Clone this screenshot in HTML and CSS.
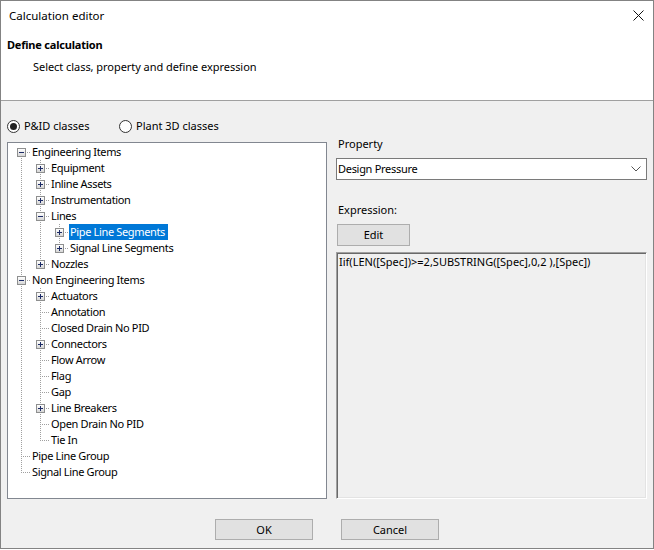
FILE: index.html
```html
<!DOCTYPE html>
<html>
<head>
<meta charset="utf-8">
<title>Calculation editor</title>
<link rel="stylesheet" href="styles.css">
</head>
<body>
<div class="window">
  <div class="titlebar">
    <span class="title">Calculation editor</span>
    <svg class="close" width="11" height="11" viewBox="0 0 11 11"><path d="M0.5 0.5L10.5 10.5M10.5 0.5L0.5 10.5" stroke="#111" stroke-width="1" fill="none"/></svg>
  </div>
  <div class="header">
    <div class="h-title">Define calculation</div>
    <div class="h-sub">Select class, property and define expression</div>
  </div>
  <div class="body">
    <div class="main">
      <div class="left">
        <div class="radios">
          <label class="radio first"><svg width="13" height="13" viewBox="0 0 13 13"><circle cx="6.5" cy="6.5" r="6" fill="#fff" stroke="#333"/><circle cx="6.5" cy="6.5" r="3.5" fill="#222"/></svg><span>P&amp;ID classes</span></label>
          <label class="radio"><svg width="13" height="13" viewBox="0 0 13 13"><circle cx="6.5" cy="6.5" r="6" fill="#fff" stroke="#333"/></svg><span>Plant 3D classes</span></label>
        </div>
        <div class="tree">
          <div class="row"><span class="c start"><i class="box minus"></i></span><span class="lbl">Engineering Items</span></div>
          <div class="row"><span class="c pipe"></span><span class="c tee"><i class="box plus"></i></span><span class="lbl">Equipment</span></div>
          <div class="row"><span class="c pipe"></span><span class="c tee"><i class="box plus"></i></span><span class="lbl">Inline Assets</span></div>
          <div class="row"><span class="c pipe"></span><span class="c tee"><i class="box plus"></i></span><span class="lbl">Instrumentation</span></div>
          <div class="row"><span class="c pipe"></span><span class="c tee"><i class="box minus"></i></span><span class="lbl">Lines</span></div>
          <div class="row"><span class="c pipe"></span><span class="c pipe"></span><span class="c tee"><i class="box plus"></i></span><span class="lbl sel">Pipe Line Segments</span></div>
          <div class="row"><span class="c pipe"></span><span class="c pipe"></span><span class="c elbow"><i class="box plus"></i></span><span class="lbl">Signal Line Segments</span></div>
          <div class="row"><span class="c pipe"></span><span class="c elbow"><i class="box plus"></i></span><span class="lbl">Nozzles</span></div>
          <div class="row"><span class="c tee"><i class="box minus"></i></span><span class="lbl">Non Engineering Items</span></div>
          <div class="row"><span class="c pipe"></span><span class="c tee"><i class="box plus"></i></span><span class="lbl">Actuators</span></div>
          <div class="row"><span class="c pipe"></span><span class="c tee"></span><span class="lbl">Annotation</span></div>
          <div class="row"><span class="c pipe"></span><span class="c tee"></span><span class="lbl">Closed Drain No PID</span></div>
          <div class="row"><span class="c pipe"></span><span class="c tee"><i class="box plus"></i></span><span class="lbl">Connectors</span></div>
          <div class="row"><span class="c pipe"></span><span class="c tee"></span><span class="lbl">Flow Arrow</span></div>
          <div class="row"><span class="c pipe"></span><span class="c tee"></span><span class="lbl">Flag</span></div>
          <div class="row"><span class="c pipe"></span><span class="c tee"></span><span class="lbl">Gap</span></div>
          <div class="row"><span class="c pipe"></span><span class="c tee"><i class="box plus"></i></span><span class="lbl">Line Breakers</span></div>
          <div class="row"><span class="c pipe"></span><span class="c tee"></span><span class="lbl">Open Drain No PID</span></div>
          <div class="row"><span class="c pipe"></span><span class="c elbow"></span><span class="lbl">Tie In</span></div>
          <div class="row"><span class="c tee"></span><span class="lbl">Pipe Line Group</span></div>
          <div class="row"><span class="c elbow"></span><span class="lbl">Signal Line Group</span></div>
        </div>
      </div>
      <div class="right">
        <div class="label prop-label">Property</div>
        <div class="combo">
          <span>Design Pressure</span>
          <svg width="10" height="6" viewBox="0 0 10 6"><path d="M0.5 0.5L5 5L9.5 0.5" stroke="#555" fill="none"/></svg>
        </div>
        <div class="label expr-label">Expression:</div>
        <button class="btn edit">Edit</button>
        <div class="expr">Iif(LEN([Spec])&gt;=2,SUBSTRING([Spec],0,2 ),[Spec])</div>
      </div>
    </div>
    <div class="footer">
      <button class="btn ok">OK</button>
      <button class="btn cancel">Cancel</button>
    </div>
  </div>
</div>
</body>
</html>
```
FILE: styles.css
```css
* { box-sizing: border-box; }
html, body { margin: 0; padding: 0; background: #fff; }
body {
  font-family: "Noto Sans", "DejaVu Sans", sans-serif;
  font-size: 11px;
  color: #000;
}
.window {
  width: 654px;
  height: 549px;
  border: 1px solid #838383;
  display: flex;
  flex-direction: column;
  background: #f0f0f0;
}
.titlebar {
  height: 30px;
  flex: none;
  background: #fff;
  display: flex;
  align-items: center;
  justify-content: space-between;
  padding: 0 9px 0 8px;
  font-size: 11.5px;
}
.title { line-height: 16px; }
.close { display: block; margin-top: -2px; }
.header {
  flex: none;
  height: 70px;
  background: #fff;
  border-bottom: 1px solid #a0a0a0;
  padding: 6px 0 0 6px;
}
.h-title { font-weight: bold; line-height: 16px; letter-spacing: -0.2px; }
.h-sub { line-height: 16px; margin: 6px 0 0 26px; letter-spacing: -0.05px; }
.body {
  flex: 1;
  display: flex;
  flex-direction: column;
  padding-left: 6px;
}
.main { display: flex; gap: 9px; }
.left { width: 320px; flex: none; }
.radios {
  display: flex;
  align-items: center;
  height: 16px;
  margin: 17px 0 8px;
}
.radio { display: flex; align-items: center; gap: 4px; line-height: 16px; }
.radio svg { display: block; }
.radio.first { width: 112px; }
.tree {
  height: 357px;
  background: #fff;
  border: 1px solid #828790;
  padding: 1px 0 0 4px;
}
.row { display: flex; height: 16px; }
.c {
  --v: repeating-linear-gradient(to bottom, #a0a0a0 0 1px, transparent 1px 2px);
  --h: repeating-linear-gradient(to right, #a0a0a0 0 1px, transparent 1px 2px);
  width: 19px;
  height: 16px;
  flex: none;
  display: block;
}
.pipe { background: var(--v) 9px 0 / 1px 16px no-repeat; }
.tee { background: var(--h) 9px 8px / 10px 1px no-repeat, var(--v) 9px 0 / 1px 16px no-repeat; }
.elbow { background: var(--h) 9px 8px / 10px 1px no-repeat, var(--v) 9px 0 / 1px 8px no-repeat; }
.start { background: var(--h) 9px 8px / 10px 1px no-repeat, var(--v) 9px 8px / 1px 8px no-repeat; }
.box {
  display: block;
  width: 9px;
  height: 9px;
  margin: 4px 0 0 5px;
  border: 1px solid #8e8f8f;
}
.box.plus {
  background:
    linear-gradient(#1c2b66, #1c2b66) 1px 3px / 5px 1px no-repeat,
    linear-gradient(#1c2b66, #1c2b66) 3px 1px / 1px 5px no-repeat,
    linear-gradient(#fff, #d6d6d6);
}
.box.minus {
  background:
    linear-gradient(#1c2b66, #1c2b66) 1px 3px / 5px 1px no-repeat,
    linear-gradient(#fff, #d6d6d6);
}
.lbl { line-height: 16px; padding: 0 3px 0 1px; white-space: nowrap; letter-spacing: -0.35px; }
.lbl.sel { background: #0078d7; color: #fff; }
.right { width: 311px; flex: none; display: flex; flex-direction: column; }
.label { line-height: 16px; padding-left: 2px; }
.prop-label { margin-top: 35px; }
.combo {
  margin-top: 6px;
  height: 22px;
  background: #fff;
  border: 1px solid #7a7a7a;
  display: flex;
  align-items: center;
  justify-content: space-between;
  padding: 0 5px 2px 1px;
  letter-spacing: -0.3px;
}
.combo svg { display: block; margin-top: 1px; }
.expr-label { margin-top: 22px; }
.btn {
  font: inherit;
  color: #000;
  background: #e1e1e1;
  border: 1px solid #adadad;
  padding: 0;
  line-height: 16px;
}
.edit { width: 73px; height: 22px; margin: 6px 0 0 1px; }
.expr {
  margin-top: 6px;
  height: 247px;
  background: #f0f0f0;
  border: 1px solid;
  border-color: #a0a0a0 #fff #fff #a0a0a0;
  box-shadow: inset 1px 1px 0 #696969, inset -1px -1px 0 #e3e3e3;
  padding: 1px 2px;
  line-height: 16px;
  white-space: nowrap;
}
.footer {
  display: flex;
  justify-content: center;
  gap: 28px;
  padding: 20px 6px 0 0;
}
.ok, .cancel { width: 98px; height: 21px; }
```
